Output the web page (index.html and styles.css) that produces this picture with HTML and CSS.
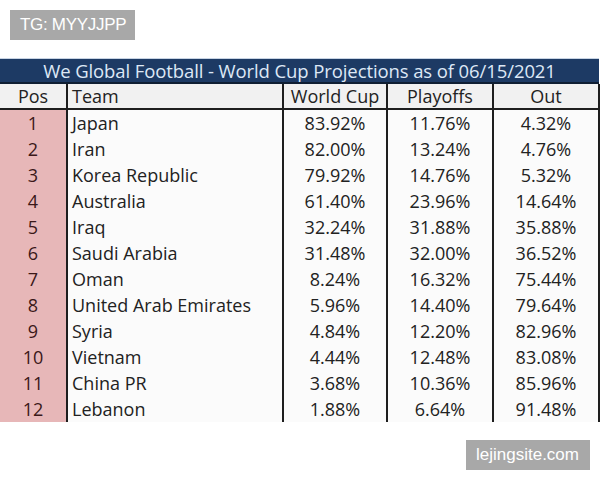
FILE: index.html
```html
<!DOCTYPE html>
<html>
<head>
<meta charset="utf-8">
<link rel="stylesheet" href="styles.css">
</head>
<body>
<div class="page">
  <div class="tag tag-top">TG: MYYJJPP</div>
  <div class="sheet">
    <div class="title">We Global Football - World Cup Projections as of 06/15/2021</div>
    <table class="grid">
      <colgroup>
        <col class="c-pos"><col class="c-team"><col class="c-wc"><col class="c-po"><col class="c-out">
      </colgroup>
      <thead>
        <tr><th class="pos">Pos</th><th class="team">Team</th><th>World Cup</th><th>Playoffs</th><th>Out</th></tr>
      </thead>
      <tbody>
        <tr><td class="pos">1</td><td class="team">Japan</td><td>83.92%</td><td>11.76%</td><td>4.32%</td></tr>
        <tr><td class="pos">2</td><td class="team">Iran</td><td>82.00%</td><td>13.24%</td><td>4.76%</td></tr>
        <tr><td class="pos">3</td><td class="team">Korea Republic</td><td>79.92%</td><td>14.76%</td><td>5.32%</td></tr>
        <tr><td class="pos">4</td><td class="team">Australia</td><td>61.40%</td><td>23.96%</td><td>14.64%</td></tr>
        <tr><td class="pos">5</td><td class="team">Iraq</td><td>32.24%</td><td>31.88%</td><td>35.88%</td></tr>
        <tr><td class="pos">6</td><td class="team">Saudi Arabia</td><td>31.48%</td><td>32.00%</td><td>36.52%</td></tr>
        <tr><td class="pos">7</td><td class="team">Oman</td><td>8.24%</td><td>16.32%</td><td>75.44%</td></tr>
        <tr><td class="pos">8</td><td class="team">United Arab Emirates</td><td>5.96%</td><td>14.40%</td><td>79.64%</td></tr>
        <tr><td class="pos">9</td><td class="team">Syria</td><td>4.84%</td><td>12.20%</td><td>82.96%</td></tr>
        <tr><td class="pos">10</td><td class="team">Vietnam</td><td>4.44%</td><td>12.48%</td><td>83.08%</td></tr>
        <tr><td class="pos">11</td><td class="team">China PR</td><td>3.68%</td><td>10.36%</td><td>85.96%</td></tr>
        <tr><td class="pos">12</td><td class="team">Lebanon</td><td>1.88%</td><td>6.64%</td><td>91.48%</td></tr>
      </tbody>
    </table>
  </div>
  <div class="footer-row">
    <div class="tag tag-bottom">lejingsite.com</div>
  </div>
</div>
</body>
</html>
```
FILE: styles.css
```css
html, body {
  margin: 0;
  padding: 0;
  background: #ffffff;
}
.page {
  width: 600px;
  height: 480px;
  position: relative;
  font-family: "Open Sans", "Noto Sans", sans-serif;
}
.tag {
  background: #a8a8a8;
  color: #ffffff;
  font-family: "Liberation Sans", Arial, sans-serif;
  height: 30px;
  line-height: 30px;
  box-sizing: border-box;
  white-space: nowrap;
}
.tag-top {
  position: absolute;
  left: 10px;
  top: 10px;
  width: 125px;
  padding-left: 10px;
  font-size: 17px;
  letter-spacing: -0.3px;
}
.sheet {
  position: absolute;
  left: 0;
  top: 58px;
  width: 599px;
}
.title {
  height: 23px;
  line-height: 24px;
  background: #1d3a64;
  color: #dde8f6;
  text-align: center;
  font-size: 18.5px;
  border-top: 1px solid #c8d4e4;
  border-bottom: 2px solid #0f1e33;
  letter-spacing: -0.1px;
  white-space: nowrap;
  overflow: hidden;
}
.grid {
  border-collapse: collapse;
  table-layout: fixed;
  width: 599px;
  font-size: 18px;
  color: #222;
}
.c-pos { width: 67px; }
.c-team { width: 216px; }
.c-wc { width: 104px; }
.c-po { width: 106px; }
.c-out { width: 106px; }
.grid th, .grid td {
  height: 26px;
  padding: 0;
  text-align: center;
  font-weight: normal;
  border-left: 2px solid #1e1e1e;
  border-right: 2px solid #1e1e1e;
  white-space: nowrap;
  line-height: 26px;
}
.grid th {
  height: 24px;
  line-height: 24px;
  background: #f1f1f1;
  border-bottom: 2px solid #1e1e1e;
}
.grid td {
  background: #fbfbfb;
}
.grid .pos {
  border-left: none;
}
.grid td.pos {
  background: #e7b7b8;
  color: #3a1818;
}
.grid .team {
  text-align: left;
  padding-left: 4px;
}
.footer-row {
  position: absolute;
  right: 10px;
  top: 440px;
}
.tag-bottom {
  width: 124px;
  padding-left: 10px;
  font-size: 17px;
}
```
